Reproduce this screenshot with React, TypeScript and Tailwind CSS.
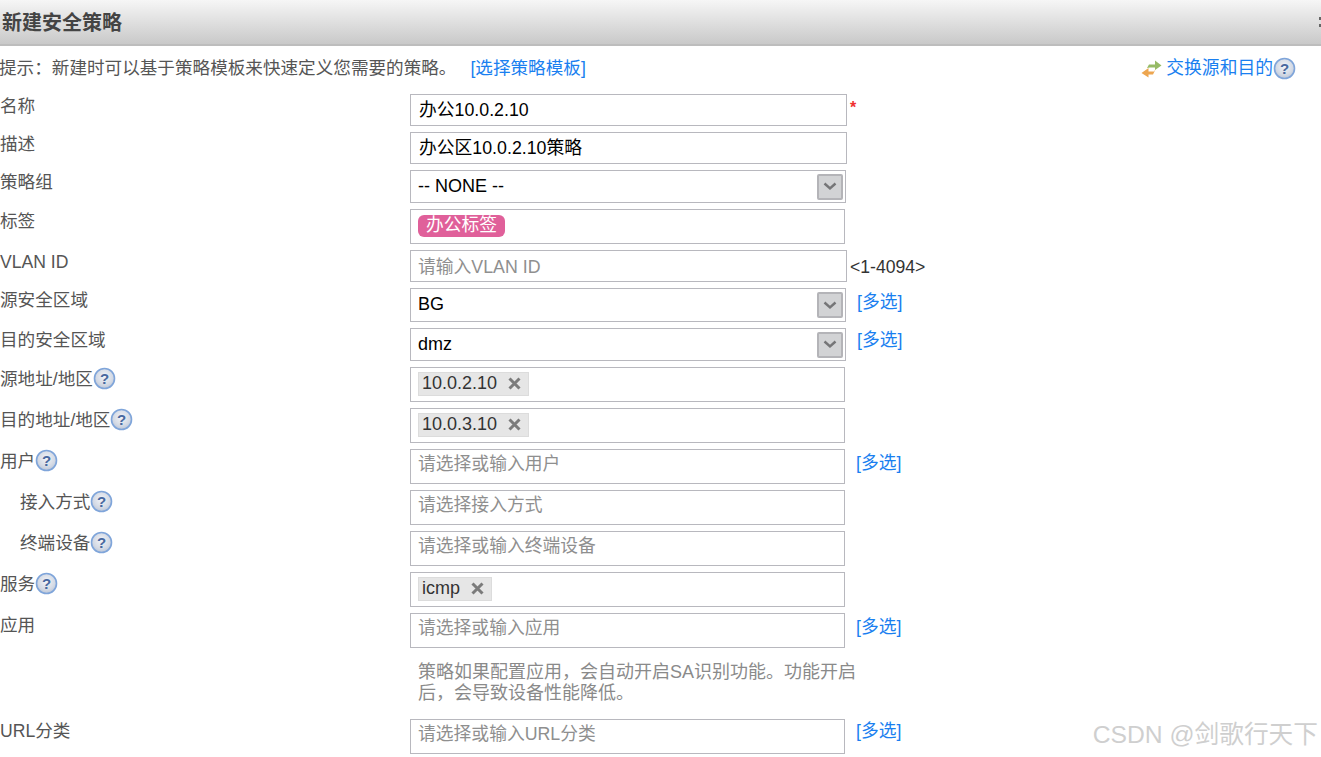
import React from "react";

const FONT = "[font-family:'Liberation_Sans','Noto_Sans_CJK_SC',sans-serif]";

function Help() {
    return (
        <svg width="23" height="23" viewBox="0 0 23 23" className="shrink-0">
            <defs>
                <radialGradient id="helpBg" cx="50%" cy="40%" r="60%">
                    <stop offset="0%" stopColor="#f2f4f8" />
                    <stop offset="70%" stopColor="#d3d9e4" />
                    <stop offset="100%" stopColor="#b9c4d6" />
                </radialGradient>
            </defs>
            <circle cx="11.5" cy="11.5" r="10" fill="url(#helpBg)" stroke="#7fa5da" strokeWidth="1.6" />
            <text x="11.5" y="16.5" textAnchor="middle" fontSize="15" fontWeight="700" fill="#47689f" fontFamily="Liberation Sans">
                ?
            </text>
        </svg>
    );
}

function SwapIcon() {
    return (
        <svg width="21" height="20" viewBox="0 0 21 20" className="shrink-0">
            <path d="M6 10 L8 6.5 L14 6.5 L14 2.5 L20.5 7.5 L14 12 L14 9.5 L9 9.5 Z" fill="#97bb66" />
            <path d="M15 10.5 L13 13.5 L7.5 13.5 L7.5 10 L0.5 15 L7.5 19.5 L7.5 16.5 L12 16.5 Z" fill="#eda650" />
        </svg>
    );
}

function Arrow() {
    return (
        <div className="flex h-[26px] w-[26px] items-center justify-center rounded-[2px] border-2 border-[#b4b4b8] bg-[#d2d3d5]">
            <svg width="14" height="9" viewBox="0 0 14 9">
                <path d="M1.5 1.5 L7 6.5 L12.5 1.5" fill="none" stroke="#757577" strokeWidth="2.4" />
            </svg>
        </div>
    );
}

function Chip({ text }: { text: string }) {
    return (
        <span className="-ml-[1px] -mt-[2px] flex h-[24px] items-center gap-[11px] border border-[#dcdcdc] bg-[#e6e6e6] pl-[3px] pr-[7px] text-[18px] text-[#333]">
            {text}
            <svg width="13" height="13" viewBox="0 0 13 13">
                <path d="M1.5 1.5 L11.5 11.5 M11.5 1.5 L1.5 11.5" stroke="#7b7b7b" strokeWidth="3" />
            </svg>
        </span>
    );
}

function More({ up }: { up?: boolean }) {
    return (
        <a className={`ml-[11px] self-start text-[17.8px] leading-[26px] text-[#1a7ff0] ${up ? "-mt-[1px]" : "mt-[1px]"}`}>
            [多选]
        </a>
    );
}

function Row({
    label,
    help,
    indent,
    top,
    height,
    children,
    after,
}: {
    label: string;
    help?: boolean;
    indent?: boolean;
    top: string;
    height: string;
    children: React.ReactNode;
    after?: React.ReactNode;
}) {
    return (
        <div className={`flex ${top} ${height}`}>
            <div className={`flex w-[410px] shrink-0 items-start text-[17.6px] leading-[24px] text-[#555] ${indent ? "pl-[20px]" : ""}`}>
                <span>{label}</span>
                {help && <Help />}
            </div>
            {children}
            {after}
        </div>
    );
}

function Box({ wide, children }: { wide?: boolean; children?: React.ReactNode }) {
    return (
        <div className={`flex h-full items-center border border-[#b8b8be] bg-white pl-[8px] text-[17.8px] text-black ${wide ? "w-[437px]" : "w-[435px]"}`}>
            {children}
        </div>
    );
}

function Hint({ text }: { text: string }) {
    return <span className="-ml-[1px] -mt-[5px] text-[17.8px] text-[#8f8f8f]">{text}</span>;
}

function Select({ value }: { value: string }) {
    return (
        <div className="flex h-full w-[436px] items-center justify-between border border-[#b8b8be] bg-white pl-[7px] pr-[2px] text-[18px] text-black">
            <span className="-mt-[1px]">{value}</span>
            <Arrow />
        </div>
    );
}

export default function App() {
    return (
        <div className={`h-[757px] w-[1321px] overflow-hidden bg-white ${FONT}`}>
            <div className="flex h-[46px] items-center justify-between border-b-2 border-[#bdbdbd] bg-gradient-to-b from-[#f6f6f6] to-[#c9c9c9] pl-[2px]">
                <h1 className="mt-[1px] text-[20px] font-bold text-[#444]">新建安全策略</h1>
                <div className="flex flex-col gap-[4px]">
                    <div className="h-[3px] w-[2px] bg-[#666]" />
                    <div className="h-[3px] w-[2px] bg-[#666]" />
                </div>
            </div>

            <div className="mt-[8px] flex h-[28px] items-center justify-between pr-[25px] text-[17.6px]">
                <p className="-ml-[1px] text-[#555]">
                    提示：新建时可以基于策略模板来快速定义您需要的策略。
                    <a className="ml-[14px] text-[#1a7ff0]">[选择策略模板]</a>
                </p>
                <a className="flex items-center text-[17.8px] text-[#1a7ff0]">
                    <SwapIcon />
                    <span className="ml-[4px]">交换源和目的</span>
                    <Help />
                </a>
            </div>

            <Row
                label="名称"
                top="mt-[12px]"
                height="h-[32px]"
                after={<span className="ml-[3px] mt-[7px] text-[16px] font-bold leading-[14px] text-[#f03030]">*</span>}
            >
                <Box wide>办公10.0.2.10</Box>
            </Row>
            <Row label="描述" top="mt-[6px]" height="h-[32px]">
                <Box wide>办公区10.0.2.10策略</Box>
            </Row>
            <Row label="策略组" top="mt-[6px]" height="h-[33px]">
                <Select value="-- NONE --" />
            </Row>
            <Row label="标签" top="mt-[6px]" height="h-[35px]">
                <Box>
                    <span className="-ml-[1px] -mt-[2px] flex h-[22px] items-center rounded-[6px] bg-[#e0609a] px-[8px] text-[17.8px] text-white">办公标签</span>
                </Box>
            </Row>
            <Row
                label="VLAN ID"
                top="mt-[6px]"
                height="h-[32px]"
                after={<span className="ml-[3px] mt-[5px] text-[17.6px] leading-[24px] text-[#333]">&lt;1-4094&gt;</span>}
            >
                <Box wide>
                    <span className="-ml-[1px] mt-[2px] text-[17.8px] text-[#8f8f8f]">请输入VLAN ID</span>
                </Box>
            </Row>
            <Row label="源安全区域" top="mt-[6px]" height="h-[34px]" after={<More />}>
                <Select value="BG" />
            </Row>
            <Row label="目的安全区域" top="mt-[6px]" height="h-[33px]" after={<More up />}>
                <Select value="dmz" />
            </Row>
            <Row label="源地址/地区" help top="mt-[6px]" height="h-[35px]">
                <Box>
                    <Chip text="10.0.2.10" />
                </Box>
            </Row>
            <Row label="目的地址/地区" help top="mt-[6px]" height="h-[35px]">
                <Box>
                    <Chip text="10.0.3.10" />
                </Box>
            </Row>
            <Row label="用户" help top="mt-[6px]" height="h-[35px]" after={<More />}>
                <Box>
                    <Hint text="请选择或输入用户" />
                </Box>
            </Row>
            <Row label="接入方式" help indent top="mt-[6px]" height="h-[35px]">
                <Box>
                    <Hint text="请选择接入方式" />
                </Box>
            </Row>
            <Row label="终端设备" help indent top="mt-[6px]" height="h-[35px]">
                <Box>
                    <Hint text="请选择或输入终端设备" />
                </Box>
            </Row>
            <Row label="服务" help top="mt-[6px]" height="h-[35px]">
                <Box>
                    <Chip text="icmp" />
                </Box>
            </Row>
            <Row label="应用" top="mt-[6px]" height="h-[35px]" after={<More />}>
                <Box>
                    <Hint text="请选择或输入应用" />
                </Box>
            </Row>

            <p className="ml-[418px] mt-[14px] w-[440px] text-[18px] leading-[21px] text-[#8a8a8a]">
                策略如果配置应用，会自动开启SA识别功能。功能开启后，会导致设备性能降低。
            </p>

            <div className="relative mt-[15px]">
                <Row label="URL分类" top="mt-0" height="h-[35px]" after={<More up />}>
                    <Box>
                        <Hint text="请选择或输入URL分类" />
                    </Box>
                </Row>
                <span className="absolute right-[3px] top-[0px] text-[24.7px] leading-[32px] text-[#cfcfcf]">CSDN @剑歌行天下</span>
            </div>
        </div>
    );
}
